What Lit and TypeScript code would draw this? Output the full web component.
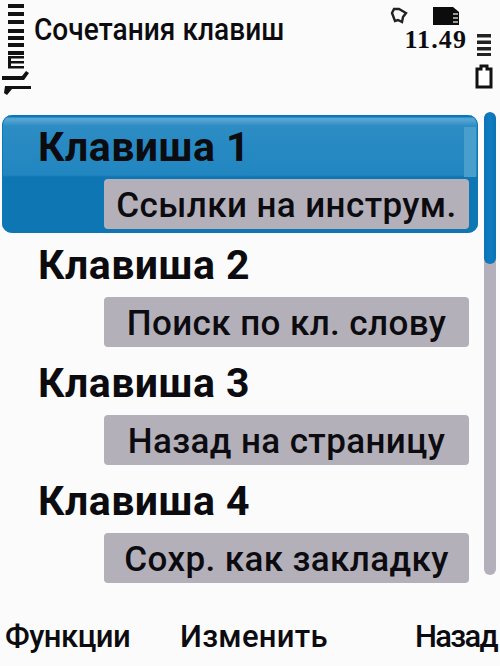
import { LitElement, html, css, svg } from "lit";
import { customElement } from "lit/decorators.js";

const ITEMS = [
  ["Клавиша 1", "Ссылки на инструм."],
  ["Клавиша 2", "Поиск по кл. слову"],
  ["Клавиша 3", "Назад на страницу"],
  ["Клавиша 4", "Сохр. как закладку"],
];

@customElement("app-root")
export class AppRoot extends LitElement {
  static styles = css`
    :host { display: block; width: 500px; height: 666px; background: #fbfbfb; overflow: hidden;
      font-family: Roboto, "Noto Sans", sans-serif; color: #0c0c10; }
    .screen { width: 500px; height: 666px; display: grid; grid-template-rows: 115px 1fr 56px; }
    .head { display: grid; grid-template-columns: 34px 1fr 110px; }
    .signal { padding: 2px 0 0 2px; }
    .title { font-size: 31px; line-height: 34px; padding-top: 13px; white-space: nowrap; font-weight: 500; transform: scaleX(0.905); transform-origin: 0 0; letter-spacing: 0.05px; }
    .status { display: grid; grid-template-columns: 1fr 26px; }
    .status-left { display: flex; flex-direction: column; align-items: flex-end; padding: 6px 7px 0 0; }
    .status-icons { display: flex; gap: 24px; padding-right: 7px; align-items: center; height: 20px; }
    .clock { font-family: "Liberation Serif", serif; font-weight: 700; font-size: 26px; line-height: 26px; letter-spacing: 1.1px; margin-top: 1px; }
    .battery { padding: 34px 0 0 1px; display: flex; flex-direction: column; }
    .body { display: grid; grid-template-columns: 484px 12px; align-items: start; }
    .list { display: flex; flex-direction: column; padding-left: 2px; width: 476px; }
    .item { height: 118px; box-sizing: border-box; padding: 0 9px 4px 0; display: flex; flex-direction: column; justify-content: flex-end; position: relative; border-radius: 10px; }
    .item.sel { background: linear-gradient(#0a78b8 0, #0a78b8 2px, #54a5d2 3px, #54a5d2 5px, #2d8cc4 11px, #2186c0 60px, #0f76b4 62px, #0f76b4 100%);
      box-shadow: inset -1px 0 0 #0b78b8, inset 1px 0 0 #0b78b8; }
    .item.sel::after { content: ""; position: absolute; right: 2px; top: 12px; width: 12px; height: 50px; background: #4a9ecb; }
    .name { font-size: 41px; font-weight: 700; line-height: 46px; letter-spacing: 0.5px; padding-left: 36px; margin-bottom: 9px; position: relative; z-index: 1; }
    .value { height: 50px; box-sizing: border-box; margin-left: 102px; width: 365px; background: #b4b0ba; border-radius: 4px; font-size: 35px; font-weight: 500; line-height: 54px; letter-spacing: 0.4px; text-align: center; white-space: nowrap; position: relative; z-index: 1; overflow: hidden; }
    .track { width: 12px; height: 463px; margin-top: -3px; background: #b3b0bb; border-radius: 6px; position: relative; overflow: hidden; }
    .thumb { position: absolute; left: 0; top: 0; width: 100%; height: 152px; background: linear-gradient(90deg, #0a72b4, #0f7cc0 50%, #0a72b4); border-radius: 6px; }
    .soft { display: grid; grid-template-columns: 175px 1fr auto; font-size: 31px; line-height: 40px; padding: 7px 3px 0 5px; white-space: nowrap; align-items: start; font-weight: 500; }
    .soft .mid { letter-spacing: 0.3px; }
    .soft .f { letter-spacing: -0.5px; }
    .soft .b { letter-spacing: -1.7px; }
  `;

  private signalIcon() {
    const bars = [2, 10, 18, 27, 34, 41, 49].map((y) => svg`<rect x="6" y=${y} width="16" height="4" />`);
    return html`<svg width="30" height="96" viewBox="0 0 30 96" fill="#111" aria-hidden="true">
      ${bars}
      <path d="M6 54h16v2.500H6zM6 59h16v2.500H6zM6 64h16v2.500H6zM6 54h3v12H6z" />
      <path d="M0 74h20l4-5 3 2-5 7H0zM3 84h26v3H10l-5 6-3-2z" />
    </svg>`;
  }

  private statusIcons() {
    return html`
      <svg width="18" height="18" viewBox="0 0 18 18" fill="none" stroke="#222" stroke-width="2.4" aria-hidden="true">
        <path d="M4 2h5l7 4-3 4-1 5-4-2-3 1-3-8z" />
      </svg>
      <svg width="28" height="20" viewBox="0 0 28 20" aria-hidden="true">
        <path d="M1 1h20l6 5v13H1z" fill="#0c0c0c" />
        <path d="M21 7h5v2h-5zM21 11h5v2h-5zM21 15h5v2h-5z" fill="#999" />
      </svg>`;
  }

  private batteryIcon() {
    return html`<svg width="20" height="56" viewBox="0 0 20 56" aria-hidden="true">
      <path d="M2 0h14v3.500H2zM2 6.500h14V10H2zM2 13h14v3.500H2zM2 19h14v3H2z" fill="#222" />
      <path d="M6 32h6v3h4v18H2V35h4z" fill="#fff" stroke="#111" stroke-width="3" />
    </svg>`;
  }

  render() {
    return html`<div class="screen">
      <div class="head">
        <div class="signal">${this.signalIcon()}</div>
        <div class="title">Сочетания клавиш</div>
        <div class="status">
          <div class="status-left">
            <div class="status-icons">${this.statusIcons()}</div>
            <div class="clock">11.49</div>
          </div>
          <div class="battery">${this.batteryIcon()}</div>
        </div>
      </div>
      <div class="body">
        <div class="list">
          ${ITEMS.map(([name, value], i) => html`<div class="item ${i === 0 ? "sel" : ""}">
            <div class="name">${name}</div>
            <div class="value">${value}</div>
          </div>`)}
        </div>
        <div class="track"><div class="thumb"></div></div>
      </div>
      <div class="soft">
        <div class="f">Функции</div>
        <div class="mid">Изменить</div>
        <div class="b">Назад</div>
      </div>
    </div>`;
  }
}
